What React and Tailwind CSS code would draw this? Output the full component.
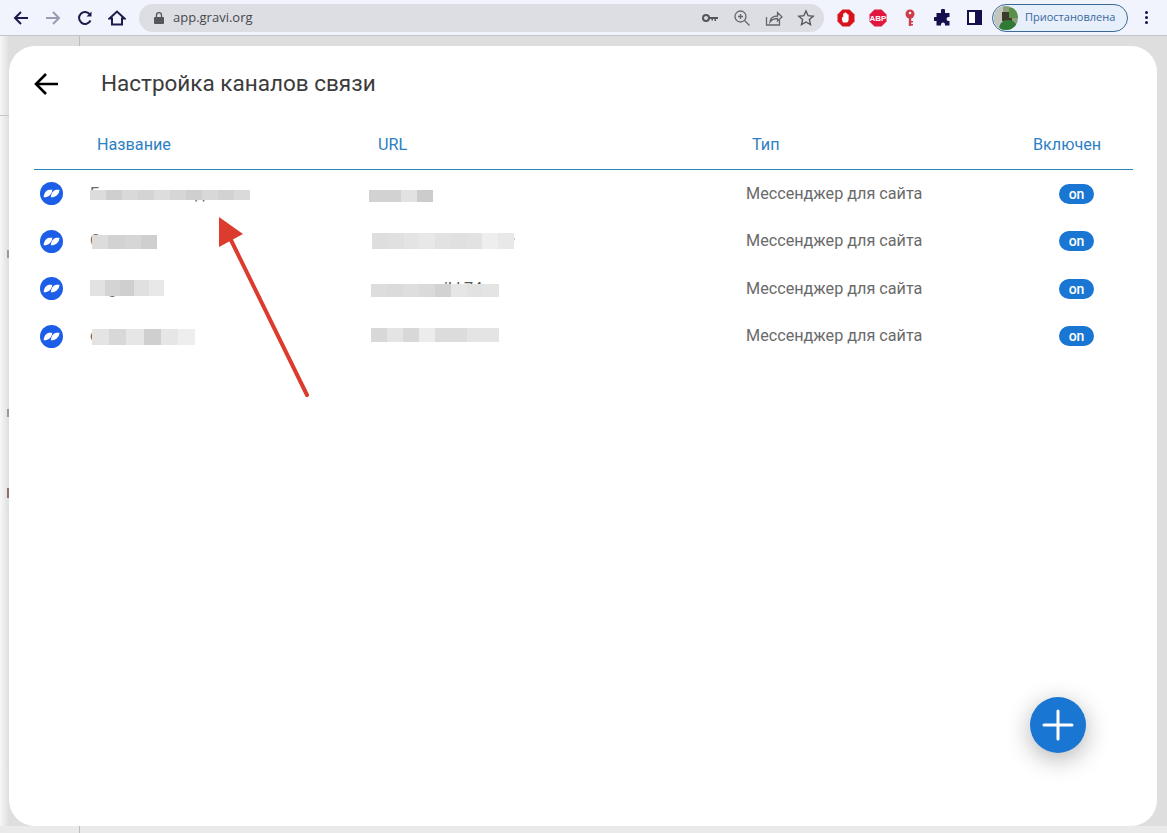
const rows = [
  {
    name: <>Г<span className="ml-[96px]">д</span></>,
    nameBlur: 'left-0 top-[20px] h-[10px] w-[160px]',
    nameCells: ['bg-[#dcdcdc]', 'bg-[#cfcfcf]', 'bg-[#d9d9d9]', 'bg-[#d4d4d4]', 'bg-[#dddddd]', 'bg-[#d6d6d6]', 'bg-[#cfcfcf]', 'bg-[#d8d8d8]', 'bg-[#d2d2d2]', 'bg-[#dadada]'],
    url: <span className="ml-[33px]">·</span>,
    urlBlur: 'left-[-1px] top-[20px] h-[12px] w-[64px]',
    urlCells: ['bg-[#d2d2d2]', 'bg-[#d2d2d2]', 'bg-[#e2e2e2]', 'bg-[#cccccc]'],
  },
  {
    name: 'С',
    nameBlur: 'left-[2px] top-[17px] h-[14px] w-[65px]',
    nameCells: ['bg-[#dcdcdc]', 'bg-[#d2d2d2]', 'bg-[#d6d6d6]', 'bg-[#cfcfcf]'],
    url: <span className="ml-[143px] text-[10px]">'</span>,
    urlBlur: 'left-[2px] top-[15px] h-[16px] w-[142px]',
    urlCells: ['bg-[#dedede]', 'bg-[#e0e0e0]', 'bg-[#e4e4e4]', 'bg-[#e8e8e8]', 'bg-[#e2e2e2]', 'bg-[#e0e0e0]', 'bg-[#e2e2e2]', 'bg-[#eeeeee]', 'bg-[#e8e8e8]'],
  },
  {
    name: <span className="ml-[18px]">g</span>,
    nameBlur: 'left-0 top-[15px] h-[16px] w-[74px]',
    nameCells: ['bg-[#e2e2e2]', 'bg-[#d4d4d4]', 'bg-[#cfcfcf]', 'bg-[#e0e0e0]', 'bg-[#e8e8e8]'],
    url: <span className="ml-[74px]">il.l 74</span>,
    urlBlur: 'left-[1px] top-[19px] h-[13px] w-[128px]',
    urlCells: ['bg-[#dddddd]', 'bg-[#dbdbdb]', 'bg-[#dedede]', 'bg-[#dadada]', 'bg-[#d2d2d2]', 'bg-[#e6e6e6]', 'bg-[#e2e2e2]', 'bg-[#e4e4e4]'],
  },
  {
    name: <>с<span className="ml-[84px]">й</span></>,
    nameBlur: 'left-[2px] top-[16px] h-[16px] w-[103px]',
    nameCells: ['bg-[#e4e4e4]', 'bg-[#d8d8d8]', 'bg-[#e6e6e6]', 'bg-[#cfcfcf]', 'bg-[#e6e6e6]', 'bg-[#eeeeee]'],
    url: null,
    urlBlur: 'left-[1px] top-[15px] h-[14px] w-[128px]',
    urlCells: ['bg-[#d8d8d8]', 'bg-[#e4e4e4]', 'bg-[#d8d8d8]', 'bg-[#ececec]', 'bg-[#dcdcdc]', 'bg-[#dcdcdc]', 'bg-[#e4e4e4]', 'bg-[#e4e4e4]'],
  },
]

const Blur = ({ box, cells }) => (
  <div className={`absolute flex ${box}`}>
    {cells.map((c, i) => (
      <span key={i} className={`flex-1 ${c}`}></span>
    ))}
  </div>
)

const ChannelLogo = () => (
  <svg width="23" height="23" viewBox="0 0 24 24" className="shrink-0">
    <circle cx="12" cy="12" r="12" fill="#1c5ee8" />
    <path d="M6 15.800L3.800 15.800C4 12 6.500 8.400 9.500 8.200L12.800 8.200C12.800 11.500 10 15.800 6 15.800Z" fill="#fff" />
    <path d="M13.500 15.800L11.300 15.800C11.500 12 14 8.400 17 8.200L20.300 8.200C20.300 11.500 17.500 15.800 13.500 15.800Z" fill="#fff" />
  </svg>
)

const BrowserBar = () => (
  <div className="h-[36px] shrink-0 flex items-center bg-[#f1f4fc] border-b border-[#c4c4c8] font-['Open_Sans',sans-serif]">
    <div className="flex items-center w-[139px] shrink-0 text-[#1c1c4c]">
      <svg width="18" height="18" viewBox="0 0 18 18" className="ml-[12px]" fill="none" stroke="currentColor" strokeWidth="2">
        <path d="M16 9H3M9 3L3 9l6 6" />
      </svg>
      <svg width="18" height="18" viewBox="0 0 18 18" className="ml-[14px]" fill="none" stroke="#9a9cb4" strokeWidth="2">
        <path d="M2 9h13M9 3l6 6-6 6" />
      </svg>
      <svg width="18" height="18" viewBox="0 0 18 18" className="ml-[14px]" fill="none" stroke="currentColor" strokeWidth="2">
        <path d="M14.500 11.500A6 6 0 1 1 14 5.500" />
        <path d="M15.500 2.500v5h-5z" fill="currentColor" stroke="none" />
      </svg>
      <svg width="18" height="18" viewBox="0 0 18 18" className="ml-[14px]" fill="none" stroke="currentColor" strokeWidth="2">
        <path d="M1.500 9.500L9 2.500l7.500 7H14v6H4v-6z" strokeLinejoin="miter" />
      </svg>
    </div>
    <div className="w-[685px] shrink-0 h-[28px] rounded-full bg-[#dcdee3] flex items-center pl-[14px] pr-[8px]">
      <svg width="12" height="14" viewBox="0 0 12 14" fill="#55565c">
        <path d="M2 6h8a1 1 0 0 1 1 1v5a1 1 0 0 1-1 1H2a1 1 0 0 1-1-1V7a1 1 0 0 1 1-1z" />
        <path d="M3.500 6V4.200a2.500 2.500 0 0 1 5 0V6" fill="none" stroke="#55565c" strokeWidth="1.300" />
      </svg>
      <span className="ml-[8px] text-[13px] text-[#47484d]">app.gravi.org</span>
      <div className="ml-auto flex items-center gap-[14px]">
        <svg width="18" height="18" viewBox="0 0 18 18" fill="none" stroke="#55565c">
          <circle cx="5" cy="9" r="3" strokeWidth="2" />
          <path d="M8 8h9v2h-2v2h-1.500v-2H12v1.500h-1.500V10H8z" fill="#55565c" strokeWidth="0" />
        </svg>
        <svg width="18" height="18" viewBox="0 0 18 18" fill="none" stroke="#66676c" strokeWidth="1.300">
          <circle cx="7.500" cy="7.500" r="5.500" />
          <path d="M11.500 11.500L16.500 16.500M5 7.500h5M7.500 5v5" />
        </svg>
        <svg width="18" height="18" viewBox="0 0 18 18" fill="none" stroke="#66676c" strokeWidth="1.300">
          <path d="M1.500 8v8h13v-5" />
          <path d="M5 13c.5-4 3.500-6 7.500-6V3.500L17 8l-4.500 4V9.500C9 9.500 7 10.500 5 13z" />
        </svg>
        <svg width="18" height="18" viewBox="0 0 18 18" fill="none" stroke="#55565c" strokeWidth="1.400" className="mr-[1px]">
          <path d="M9 2l2.100 4.700 5.100.5-3.800 3.400 1.100 5L9 13l-4.500 2.600 1.100-5-3.800-3.400 5.100-.5z" />
        </svg>
      </div>
    </div>
    <div className="ml-[13px] flex items-center gap-[14px] shrink-0">
      <svg width="18" height="18" viewBox="0 0 18 18">
        <path d="M5.500 0.500h7l5 5v7l-5 5h-7l-5-5v-7z" fill="#d8131c" />
        <path d="M6 13.500C5 11.500 4.800 9.500 5 8.500c.3-.8 1.200-.5 1.200.3V5c0-1 1.300-1 1.300 0V4c0-1 1.400-1 1.400 0v.8c0-1 1.400-.9 1.400 0v1.200c0-.9 1.300-.8 1.300.1v4.400c0 1.600-.8 3-2 3z" fill="#fff" />
      </svg>
      <svg width="18" height="18" viewBox="0 0 18 18">
        <path d="M5.500 0.500h7l5 5v7l-5 5h-7l-5-5v-7z" fill="#e0173f" />
        <text x="9" y="12" textAnchor="middle" fontSize="8" fontWeight="700" fill="#fff" fontFamily="Liberation Sans">ABP</text>
      </svg>
      <svg width="18" height="18" viewBox="0 0 18 18" fill="#d13a49">
        <circle cx="9" cy="5" r="4.500" />
        <path d="M7.800 8h2.400v9H7.800z" />
        <path d="M10 12h2v1.500h-2zM10 15h2v1.500h-2z" />
        <circle cx="9" cy="4" r="1.300" fill="#f1f4fc" />
      </svg>
      <svg width="18" height="18" viewBox="0 0 18 18" fill="#14104e" className="ml-[1px]">
        <path d="M7 1.500a2 2 0 0 1 4 0V4h4.500v4h-1a2 2 0 0 0 0 4h1v4.500H11v-1a2 2 0 0 0-4 0v1H2.500V12H1a2 2 0 0 1 0-4h1.500V4H7z" />
      </svg>
      <div className="w-[15px] h-[15px] ml-[1px] border-[2px] border-[#14104e] border-r-[7px] bg-white"></div>
    </div>
    <div className="ml-[10px] w-[136px] h-[28px] shrink-0 rounded-full border border-[#3c6a96] bg-[#e6effa] flex items-center pl-[1px]">
      <svg width="24" height="24" viewBox="0 0 24 24" className="shrink-0">
        <clipPath id="avatar-clip">
          <circle cx="12" cy="12" r="12" />
        </clipPath>
        <g clipPath="url(#avatar-clip)">
          <rect width="24" height="24" fill="#8ba07a" />
          <rect width="9" height="24" fill="#c5c5c0" />
          <path d="M8 6h10v9H8z" fill="#3c3a2c" />
          <path d="M5 24c0-7 4-10 9-10s9 3 10 10z" fill="#2f7a35" />
          <path d="M15 2h9v10h-9z" fill="#5a8f4a" />
        </g>
      </svg>
      <span className="ml-[7px] text-[11px] text-[#38689e] whitespace-nowrap">Приостановлена</span>
    </div>
    <div className="ml-[17px] flex flex-col gap-[2px]">
      <span className="w-[3px] h-[3px] rounded-full bg-[#14104e]"></span>
      <span className="w-[3px] h-[3px] rounded-full bg-[#14104e]"></span>
      <span className="w-[3px] h-[3px] rounded-full bg-[#14104e]"></span>
    </div>
  </div>
)

export default function App() {
  return (
    <div className="relative h-screen w-full overflow-hidden flex flex-col bg-[#ececec] font-['Roboto',sans-serif]">
      <BrowserBar />

      <div className="relative flex-1 min-h-0 pl-[9px] pr-[10px] pt-[10px] pb-[7px] bg-linear-to-r from-[#f7f7f7] to-[#dedede] to-[9px]">
        {/* page behind the dialog */}
        <div className="absolute left-0 right-0 bottom-0 h-[7px] bg-[#eaeaea]"></div>
        <div className="absolute left-[79px] top-0 bottom-0 w-px bg-[#bdbdbd]"></div>
        <div className="absolute left-0 top-[79px] w-[10px] h-px bg-[#c4c4c4]"></div>
        <div className="absolute left-[7px] top-[214px] w-[2px] h-[8px] bg-[#9a9a9a]"></div>
        <div className="absolute left-[7px] top-[373px] w-[2px] h-[8px] bg-[#9a9a9a]"></div>
        <div className="absolute left-[7px] top-[452px] w-[2px] h-[10px] bg-[#8f6f68]"></div>

        <div className="relative h-full bg-white rounded-[26px] px-[25px]">
          <div className="h-[75px] flex items-center">
            <svg width="24" height="24" viewBox="0 0 24 24" fill="none" stroke="#000" strokeWidth="2.600">
              <path d="M24 12H2M12 2L2 12l10 10" />
            </svg>
            <h1 className="ml-[43px] text-[22.5px] text-[#3b3b3b] font-normal whitespace-nowrap">Настройка каналов связи</h1>
          </div>

          <div className="h-[49px] pl-[63px] mr-[-1px] grid grid-cols-[281px_374px_281px_1fr] items-center border-b border-[#2a86b4] text-[16.2px] text-[#2c80c4]">
            <span>Название</span>
            <span>URL</span>
            <span>Тип</span>
            <span>Включен</span>
          </div>

          {rows.map((row, i) => (
            <div key={i} className="h-[47.5px] pl-[6px] grid grid-cols-[50px_280px_376px_313px_1fr] items-center text-[16.2px] text-[#6a6a6a]">
              <ChannelLogo />
              <div className="relative h-full flex items-center whitespace-nowrap">
                <span>{row.name}</span>
                <Blur box={row.nameBlur} cells={row.nameCells} />
              </div>
              <div className="relative h-full flex items-center whitespace-nowrap">
                <span className="text-[#555555]">{row.url}</span>
                <Blur box={row.urlBlur} cells={row.urlCells} />
              </div>
              <span className="whitespace-nowrap">Мессенджер для сайта</span>
              <span className="w-[35px] h-[20px] rounded-full bg-[#1976d2] text-white text-[14px] font-medium leading-[20px] text-center">on</span>
            </div>
          ))}

          <button className="absolute left-[1021px] top-[651px] w-[56px] h-[56px] rounded-full bg-[#1976d2] flex items-center justify-center shadow-[0_6px_24px_rgba(0,0,0,0.3)]">
            <svg width="32" height="32" viewBox="0 0 32 32" stroke="#fff" strokeWidth="3" strokeLinecap="round">
              <path d="M16 2v28M2 16h28" />
            </svg>
          </button>
        </div>
      </div>

      {/* red annotation arrow */}
      <svg className="absolute left-[210px] top-[210px]" width="110" height="195" viewBox="0 0 110 195">
        <path d="M97 185L18 24" stroke="#dc3c2e" strokeWidth="4" strokeLinecap="round" />
        <path d="M9 7L33 24L9 37Z" fill="#dc3c2e" />
      </svg>
    </div>
  )
}
